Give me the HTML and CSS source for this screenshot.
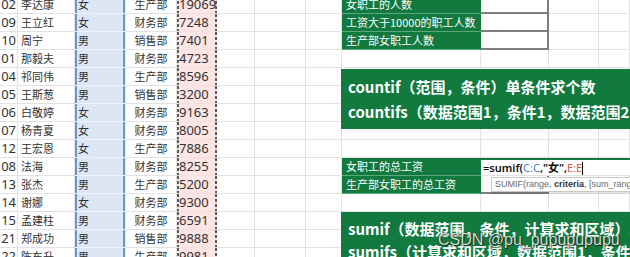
FILE: index.html
```html
<!DOCTYPE html>
<html lang="zh-CN">
<head>
<meta charset="utf-8">
<title>Sheet</title>
<link rel="stylesheet" href="styles.css">
</head>
<body>
<div class="sheet">
  <div class="row"><div class="c id">02</div><div class="c name">李达康</div><div class="c sex">女</div><div class="c dept">生产部</div><div class="c pay">19069</div><div class="c"></div><div class="c"></div><div class="c"></div><div class="c lbl">女职工的人数</div><div class="c val"></div><div class="c"></div><div class="c"></div></div>
  <div class="row"><div class="c id">09</div><div class="c name">王立红</div><div class="c sex">女</div><div class="c dept">财务部</div><div class="c pay">7248</div><div class="c"></div><div class="c"></div><div class="c"></div><div class="c lbl">工资大于10000的职工人数</div><div class="c val"></div><div class="c"></div><div class="c"></div></div>
  <div class="row"><div class="c id">10</div><div class="c name">周宁</div><div class="c sex">男</div><div class="c dept">销售部</div><div class="c pay">7401</div><div class="c"></div><div class="c"></div><div class="c"></div><div class="c lbl">生产部女职工人数</div><div class="c val"></div><div class="c"></div><div class="c"></div></div>
  <div class="row"><div class="c id">01</div><div class="c name">那毅夫</div><div class="c sex">男</div><div class="c dept">财务部</div><div class="c pay">4723</div><div class="c"></div><div class="c"></div><div class="c"></div><div class="c"></div><div class="c"></div><div class="c"></div><div class="c"></div></div>
  <div class="row"><div class="c id">04</div><div class="c name">祁同伟</div><div class="c sex">男</div><div class="c dept">生产部</div><div class="c pay">8596</div><div class="c"></div><div class="c"></div><div class="c"></div><div class="c"></div><div class="c"></div><div class="c"></div><div class="c"></div></div>
  <div class="row"><div class="c id">05</div><div class="c name">王斯葱</div><div class="c sex">男</div><div class="c dept">销售部</div><div class="c pay">3200</div><div class="c"></div><div class="c"></div><div class="c"></div><div class="c"></div><div class="c"></div><div class="c"></div><div class="c"></div></div>
  <div class="row"><div class="c id">06</div><div class="c name">白敬婷</div><div class="c sex">女</div><div class="c dept">财务部</div><div class="c pay">9163</div><div class="c"></div><div class="c"></div><div class="c"></div><div class="c"></div><div class="c"></div><div class="c"></div><div class="c"></div></div>
  <div class="row"><div class="c id">07</div><div class="c name">杨青夏</div><div class="c sex">女</div><div class="c dept">财务部</div><div class="c pay">8005</div><div class="c"></div><div class="c"></div><div class="c"></div><div class="c"></div><div class="c"></div><div class="c"></div><div class="c"></div></div>
  <div class="row"><div class="c id">12</div><div class="c name">王宏恩</div><div class="c sex">女</div><div class="c dept">生产部</div><div class="c pay">7886</div><div class="c"></div><div class="c"></div><div class="c"></div><div class="c"></div><div class="c"></div><div class="c"></div><div class="c"></div></div>
  <div class="row"><div class="c id">08</div><div class="c name">法海</div><div class="c sex">男</div><div class="c dept">财务部</div><div class="c pay">8255</div><div class="c"></div><div class="c"></div><div class="c"></div><div class="c lbl">女职工的总工资</div><div class="c formula">=sumif(<span class="ref-c">C:C</span>,"女",<span class="ref-e">E:E</span><span class="caret"></span></div></div>
  <div class="row"><div class="c id">13</div><div class="c name">张杰</div><div class="c sex">男</div><div class="c dept">生产部</div><div class="c pay">5200</div><div class="c"></div><div class="c"></div><div class="c"></div><div class="c lbl">生产部女职工的总工资</div><div class="c val2"></div><div class="c"></div><div class="c"></div></div>
  <div class="row"><div class="c id">14</div><div class="c name">谢娜</div><div class="c sex">女</div><div class="c dept">财务部</div><div class="c pay">9300</div><div class="c"></div><div class="c"></div><div class="c"></div><div class="c"></div><div class="c"></div><div class="c"></div><div class="c"></div></div>
  <div class="row"><div class="c id">15</div><div class="c name">孟建柱</div><div class="c sex">男</div><div class="c dept">财务部</div><div class="c pay">6591</div><div class="c"></div><div class="c"></div><div class="c"></div><div class="c"></div><div class="c"></div><div class="c"></div><div class="c"></div></div>
  <div class="row"><div class="c id">21</div><div class="c name">郑成功</div><div class="c sex">男</div><div class="c dept">销售部</div><div class="c pay">9888</div><div class="c"></div><div class="c"></div><div class="c"></div><div class="c"></div><div class="c"></div><div class="c"></div><div class="c"></div></div>
  <div class="row"><div class="c id">22</div><div class="c name">陈东升</div><div class="c sex">男</div><div class="c dept">生产部</div><div class="c pay">9981</div><div class="c"></div><div class="c"></div><div class="c"></div><div class="c"></div><div class="c"></div><div class="c"></div><div class="c"></div></div>
</div>

<div class="note note-count">
  <p>countif（范围，条件）单条件求个数</p>
  <p>countifs（数据范围1，条件1，数据范围2，条件2）</p>
</div>

<div class="tip">SUMIF(range, <b>criteria</b>, [sum_range])</div>

<div class="note note-sum">
  <p>sumif（数据范围，条件，计算求和区域）单条件求和</p>
  <p>sumifs（计算求和区域，数据范围1，条件1，数据范围2，条件2）</p>
</div>

<div class="mark">CSDN @pu_pupupupupu</div>
</body>
</html>
```

FILE: styles.css
```css
* {
  box-sizing: border-box;
  margin: 0;
  padding: 0;
}

html, body {
  width: 630px;
  height: 257px;
  overflow: hidden;
  background: #ffffff;
}

body {
  position: relative;
  font-family: "Noto Sans CJK SC", "Noto Sans", sans-serif;
}

.sheet {
  margin-top: -4px;
}

.row {
  display: grid;
  grid-template-columns: 18px 57px 51px 51px 40px 38px 51px 36px 139px 68px 50px 1fr;
  height: 18px;
}

.c {
  border-right: 1px solid #e2e2e2;
  border-bottom: 1px solid #e2e2e2;
  font-size: 11px;
  line-height: 17px;
  color: #333333;
  white-space: nowrap;
  overflow: hidden;
}

.id {
  font-family: "Noto Sans", sans-serif;
  font-size: 13px;
  text-align: right;
  padding-right: 1px;
}

.name {
  padding-left: 3px;
}

.sex {
  background: #dde6f5;
  border-right-color: transparent;
  border-bottom-color: #eef2fa;
  box-shadow: inset 2px 0 0 #6b96d6, inset -2px 0 0 #6b96d6;
  padding-left: 3px;
}

.dept {
  text-align: center;
}

.pay {
  font-family: "Noto Sans", sans-serif;
  font-size: 13px;
  padding-left: 2px;
  border-right: none;
  border-bottom-color: #f6dede;
  background:
    repeating-linear-gradient(to bottom, #5c5c5c 0 3px, transparent 3px 5px) left top / 2px 100% no-repeat,
    repeating-linear-gradient(to bottom, #5c5c5c 0 3px, transparent 3px 5px) right top / 2px 100% no-repeat,
    #fbe5e5;
}

.lbl {
  background: #127a3f;
  color: #ffffff;
  padding-left: 4px;
  border-right: none;
  border-bottom-color: #5da77c;
}

.val,
.val2 {
  border-right: 2px solid #7d7d7d;
  border-bottom: 2px solid #7d7d7d;
}

.formula {
  grid-column: 10 / -1;
  overflow: visible;
  font-family: "Noto Sans", "Noto Sans CJK SC", sans-serif;
  font-size: 11px;
  font-weight: 600;
  color: #111111;
  padding-left: 2px;
  border-right: none;
  border-top: 2px solid #127a3f;
  line-height: 15px;
}

.ref-c { color: #3f7fd6; font-weight: 400; }
.ref-e { color: #d9534f; font-weight: 400; }

.caret {
  display: inline-block;
  width: 1px;
  height: 13px;
  background: #000;
  vertical-align: -3px;
}

.note {
  position: absolute;
  left: 341px;
  width: 320px;
  background: #127a3f;
  color: #ffffff;
  font-family: "Noto Sans CJK SC", "Noto Sans", sans-serif;
  font-weight: 700;
  font-size: 15px;
  white-space: nowrap;
  overflow: hidden;
  padding-left: 7px;
}

.note-count {
  top: 69px;
  height: 60px;
  line-height: 25px;
  padding-top: 5px;
}

.note-sum {
  top: 212px;
  height: 60px;
  line-height: 23px;
  padding-top: 5px;
}

.tip {
  position: absolute;
  left: 491px;
  top: 177px;
  width: 160px;
  height: 15px;
  background: #ffffff;
  border: 1px solid #c9c9c9;
  box-shadow: 1px 1px 2px rgba(0, 0, 0, 0.15);
  font-family: "Liberation Sans", Arial, sans-serif;
  font-size: 9px;
  line-height: 13px;
  color: #6a6a6a;
  padding-left: 3px;
  white-space: nowrap;
  overflow: hidden;
}

.tip b {
  color: #333333;
}

.mark {
  position: absolute;
  left: 438px;
  top: 232px;
  font-family: "Liberation Sans", Arial, sans-serif;
  font-size: 16px;
  line-height: 16px;
  color: rgba(255, 255, 255, 0.85);
  text-shadow: 0 0 1px rgba(0, 0, 0, 0.9), 1px 1px 1px rgba(0, 0, 0, 0.5);
  white-space: nowrap;
}
```
